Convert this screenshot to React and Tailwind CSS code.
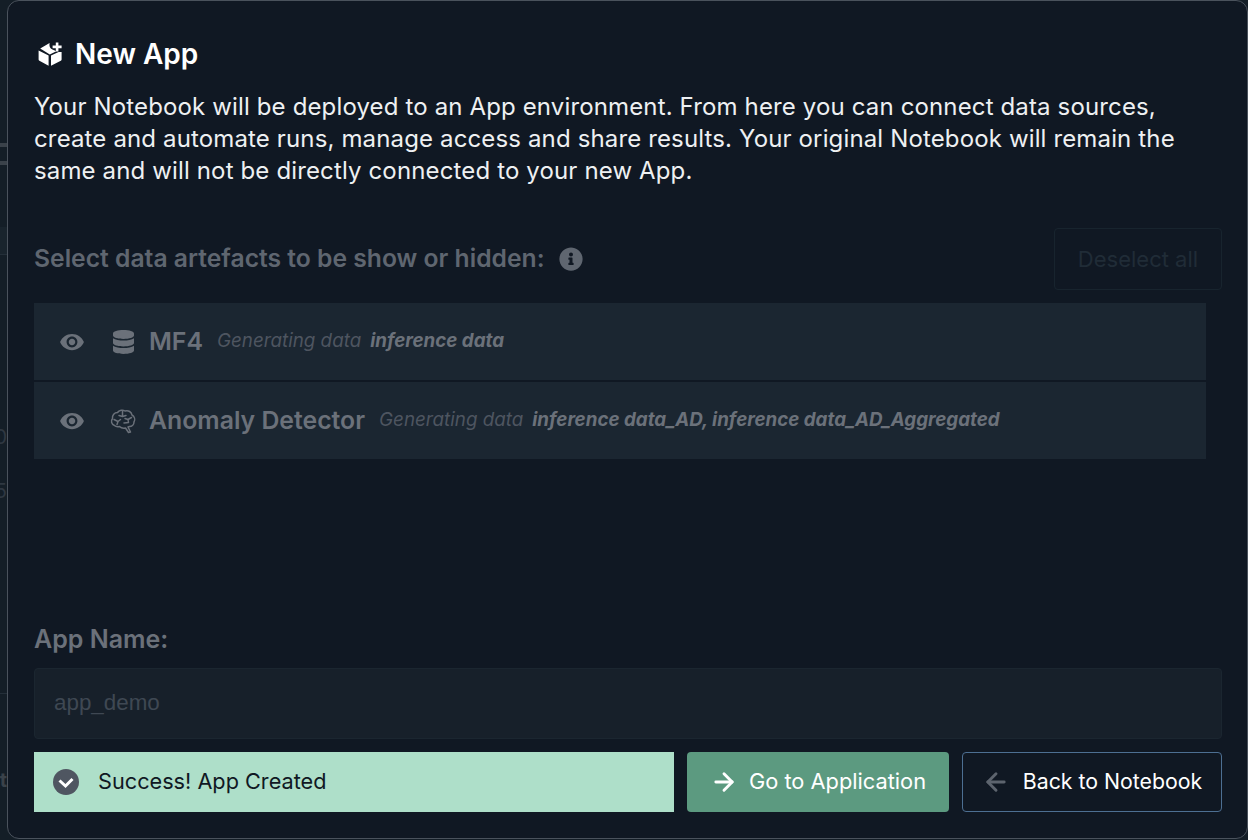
import { ArrowLeft, ArrowRight } from 'lucide-react';
import { FaDatabase, FaInfoCircle } from 'react-icons/fa';
import { MdVisibility } from 'react-icons/md';

const BoxSparkIcon = () => (
    <svg viewBox="0 0 24 24" className="h-6 w-6 fill-white">
        <path d="M2.2 6.4 L11.6 1 Q10.6 5.6 14.4 7.6 L18.4 9.2 L11.8 12.4 Z" />
        <path d="M0.6 8.4 L10.6 13.6 L10.6 23.8 L1.4 18.8 Q0.6 18.4 0.6 17.4 Z" />
        <path d="M13 13.6 L20.6 10 L23.6 10 L23.6 17.4 Q23.6 18.4 22.8 18.8 L13 23.8 Z" />
        <path d="M17.8 0.4 h2.6 v3.2 h3.2 v2.6 h-3.2 v3.2 h-2.6 v-3.2 h-3.2 v-2.6 h3.2 Z" />
    </svg>
);

const BrainIcon = () => (
    <svg viewBox="0 0 26 26" className="h-[26px] w-[26px]" fill="none" stroke="currentColor" strokeWidth="1.5" strokeLinecap="round" strokeLinejoin="round">
        <path d="M4.5 17.5 C1.5 16.5 0.5 13 2.5 10.5 C2 7 4.5 4.5 7.5 4.5 C9 2 13 1.5 15 3 C18.5 2 21.5 4 22 7 C24.5 8.5 25.5 11.5 24 14 C24 16.5 22 18.5 19.5 18.5 L18 19 L20.5 24 L18.5 24.5 L15.5 20 C12.5 20.5 11 20 9.5 18.5 C7.5 19 5.5 18.5 4.5 17.5 Z" />
        <path d="M12.5 3 L12.5 8.5 M9 7.5 L12.5 8.5 L16 7.5" />
        <path d="M4 11.5 L8 13.5 L10.5 11.5 M8 13.5 L7 16.5" />
        <path d="M21.5 9.5 L18 11.5 L18.5 14.5 L14 15 M18 11.5 L15 10.5" />
    </svg>
);

const CheckBadge = () => (
    <svg viewBox="0 0 26 26" className="h-[26px] w-[26px]">
        <circle cx="13" cy="13" r="13" fill="#4f5661" />
        <path d="M6.5 11.5 L12.5 17 L19.5 10" fill="none" stroke="#ffffff" strokeWidth="3" />
    </svg>
);

const ArtefactRow = ({ icon, name, data }) => (
    <div className="flex h-[77px] items-center bg-[#1b2631] pl-[25px] text-[#6b717a]">
        <MdVisibility className="h-[26px] w-[26px] shrink-0" />
        <div className="ml-[25px] flex w-[26px] shrink-0 justify-center">{icon}</div>
        <span className="ml-[13px] text-[24.8px] font-semibold">{name}</span>
        <span className="ml-[14px] text-[18.8px] italic text-[#4e5560]">Generating data</span>
        <span className="ml-[9px] text-[18.8px] font-bold italic">{data}</span>
    </div>
);

// what shows of the page behind the modal
const BackdropEdge = () => (
    <div className="flex w-[7px] shrink-0 flex-col overflow-hidden">
        <div className="mt-[143px] h-[4px] bg-[#3a424a]" />
        <div className="mt-[14px] h-[4px] bg-[#3a424a]" />
        <div className="mt-[62px] h-[28px] border-b border-[#242f39] bg-[#19242d]" />
        <div className="mt-[170px] flex justify-end text-[20px] leading-[24px] text-[#2f3842]">
            <span className="shrink-0">0</span>
        </div>
        <div className="mt-[30px] flex justify-end text-[20px] leading-[24px] text-[#2f3842]">
            <span className="shrink-0">5</span>
        </div>
        <div className="mt-[190px] h-px bg-[#242f39]" />
        <div className="mt-[74px] flex justify-end text-[20px] font-bold leading-[24px] text-[#3a424a]">
            <span className="shrink-0">t</span>
        </div>
    </div>
);

const App = () => {
    return (
        <div className="flex h-[840px] w-[1248px] overflow-hidden bg-[#141e27] font-['Inter',sans-serif]">
            <BackdropEdge />
            <div className="mb-px flex min-w-0 flex-1 flex-col rounded-[12px] border border-[#4a525c] bg-[#101823] pl-[26px] pr-[25px]">
                <div className="mt-[36px] flex h-[33px] items-center gap-[13px] pl-[4px]">
                    <BoxSparkIcon />
                    <h1 className="text-[28px] font-semibold text-white">New App</h1>
                </div>
                <p className="mt-[21px] text-[24px] leading-[32px] tracking-[0.14px] text-[#eef0f2]">
                    Your Notebook will be deployed to an App environment. From here you can connect data sources, create and automate runs, manage access and share results. Your original Notebook will remain the same and will not be directly connected to your new App.
                </p>

                <div className="mt-[41px] flex items-center justify-between">
                    <div className="flex items-center gap-[14px] text-[#5f6670]">
                        <span className="text-[24.7px] font-semibold">Select data artefacts to be show or hidden:</span>
                        <FaInfoCircle className="h-[24px] w-[24px]" />
                    </div>
                    <button type="button" className="h-[62px] w-[168px] rounded-[4px] border border-[#18242e] text-[22px] text-[#202c37]">
                        Deselect all
                    </button>
                </div>

                <div className="mr-[16px] mt-[13px] flex flex-col gap-[2px]">
                    <ArtefactRow icon={<FaDatabase className="h-[24px] w-[21px]" />} name="MF4" data="inference data" />
                    <ArtefactRow icon={<BrainIcon />} name="Anomaly Detector" data="inference data_AD, inference data_AD_Aggregated" />
                </div>

                <label className="mt-[162px] text-[25px] font-semibold text-[#6b717a]">App Name:</label>
                <div className="mt-[9px] flex h-[71px] items-center rounded-[4px] border border-[#1b2630] bg-[#17202a] pl-[19px] font-['Liberation_Sans',sans-serif] text-[22.4px] text-[#3f4853]">
                    app_demo
                </div>

                <div className="mt-[13px] flex gap-[13px]">
                    <div className="flex h-[60px] w-[640px] items-center gap-[19px] bg-[#aedfc9] pl-[19px] text-[21.7px] text-[#101823]">
                        <CheckBadge />
                        Success! App Created
                    </div>
                    <button type="button" className="flex h-[60px] w-[262px] items-center justify-center gap-[11px] rounded-[4px] bg-[#5c9a80] text-[21.8px] text-white">
                        <ArrowRight className="h-[28px] w-[28px]" strokeWidth={2.5} />
                        Go to Application
                    </button>
                    <button type="button" className="flex h-[60px] w-[260px] items-center justify-center gap-[13px] rounded-[4px] border border-[#4d6f92] text-[21.3px] text-white">
                        <ArrowLeft className="h-[28px] w-[28px] text-[#5d646e]" strokeWidth={2.5} />
                        Back to Notebook
                    </button>
                </div>
            </div>
        </div>
    );
};

export default App;
